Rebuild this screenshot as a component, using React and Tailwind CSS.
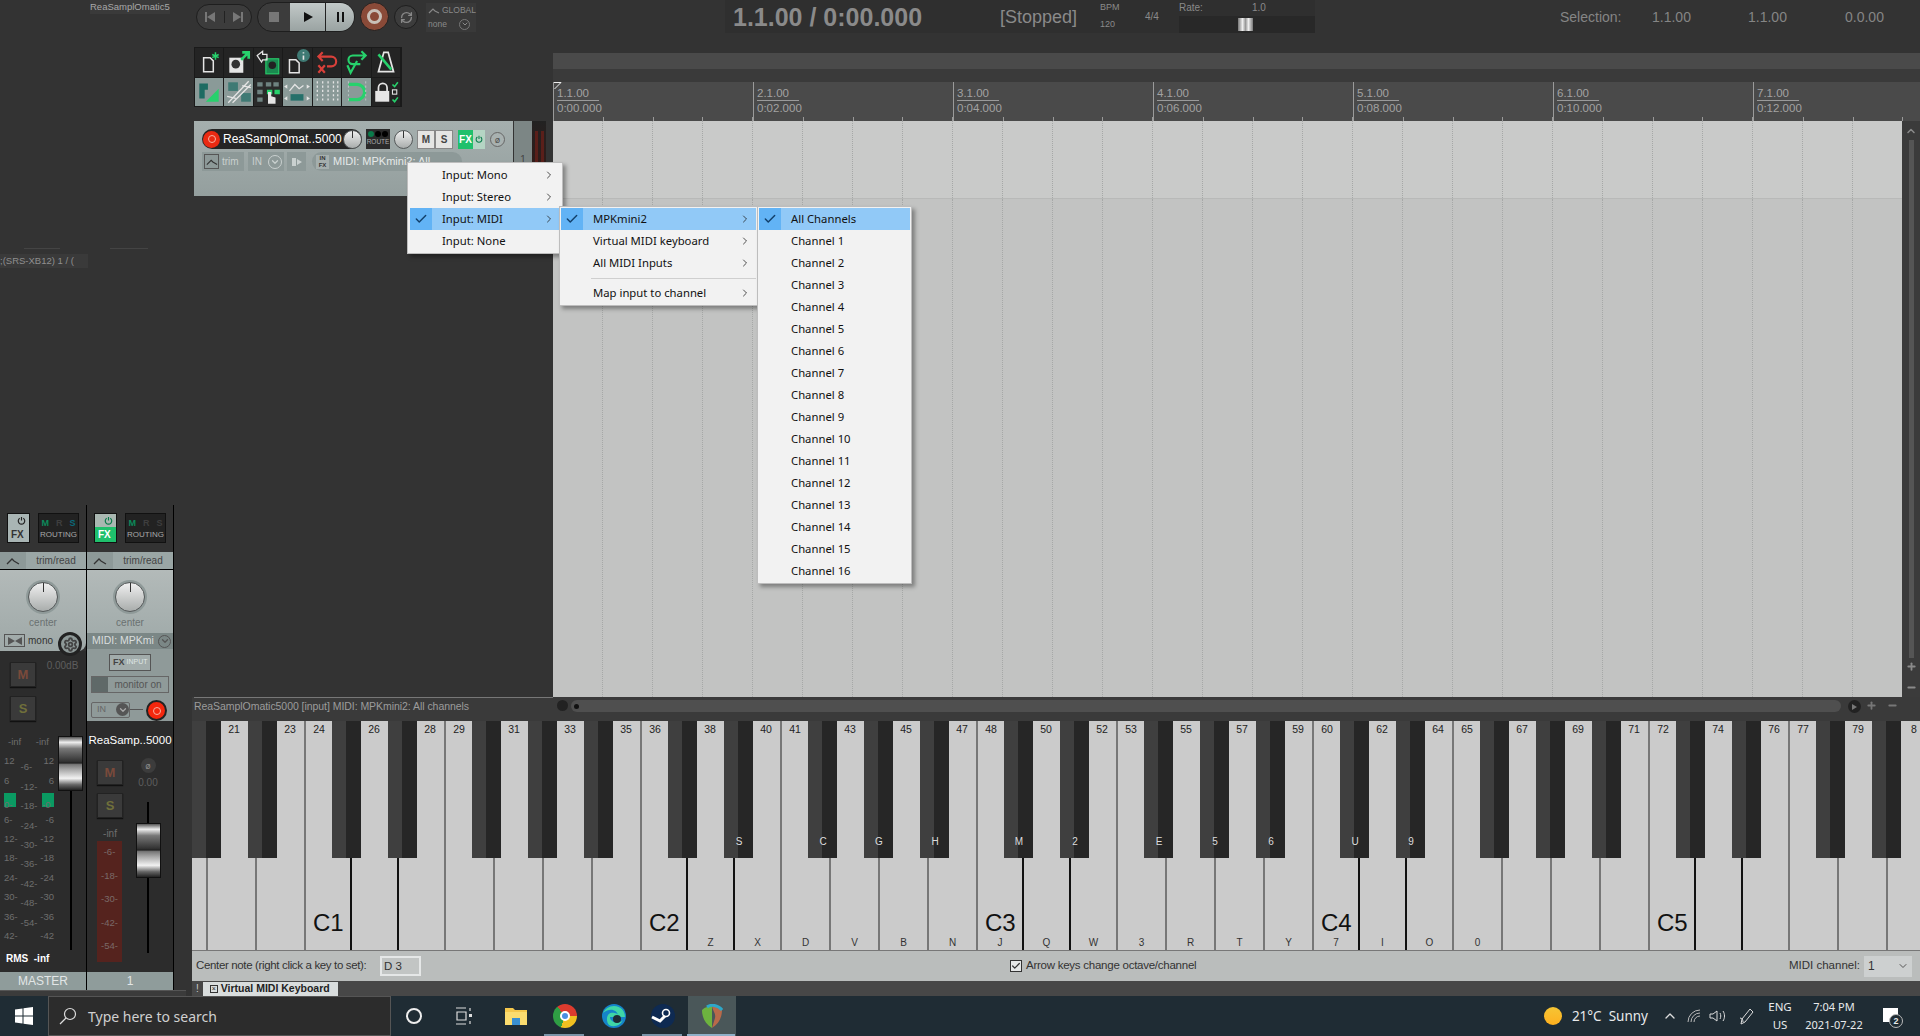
import { Check, ChevronRight, ChevronDown, ChevronUp, Plus, Minus, Settings, RefreshCw } from "lucide-react";

const SANS = "font-['Liberation_Sans',Arial,sans-serif]";
const UI = "font-['Noto_Sans','Open_Sans',sans-serif]";

const BLACK = [1, 3, 6, 8, 10];
const isBlack = (n) => BLACK.includes(n % 12);
const BLACK_LABELS = { 39: "S", 42: "C", 44: "G", 46: "H", 49: "M", 51: "2", 54: "E", 56: "5", 58: "6", 61: "U", 63: "9" };
const WHITE_LABELS = { 38: "Z", 40: "X", 41: "D", 43: "V", 45: "B", 47: "N", 48: "J", 50: "Q", 52: "W", 53: "3", 55: "R", 57: "T", 59: "Y", 60: "7", 62: "I", 64: "O", 65: "0" };
const OCTAVE = [46, 47, 47, 49, 49, 49, 49];
const WHITE_NOTES = [0, 2, 4, 5, 7, 9, 11];

const lowerKeys = () => {
  const keys = [{ w: 14, note: 19 }, { w: 49, note: 21 }, { w: 49, note: 23 }];
  for (let o = 0; o < 5; o++) {
    OCTAVE.forEach((w, i) => keys.push({ w, note: 24 + o * 12 + WHITE_NOTES[i], i }));
  }
  return keys;
};

const Knob = ({ size = "w-[30px] h-[30px]", mark = "h-[9px]" }) => (
  <div className={`${size} rounded-full bg-linear-to-b from-[#f0f0f0] to-[#a9adac] border border-[#55595a] flex justify-center shrink-0`}>
    <div className={`w-[1px] ${mark} bg-[#333]`} />
  </div>
);

const FaderThumb = () => (
  <div className="w-[25px] h-[55px] border border-[#111] bg-[linear-gradient(180deg,#555_0%,#eee_10%,#777_22%,#333_46%,#222_49%,#777_52%,#aaa_62%,#f2f2f2_78%,#666_90%,#222_100%)]" />
);

const MButton = ({ label, color }) => (
  <div className={`w-[26px] h-[25px] bg-[#3a3a3a] border border-[#222] shadow-[0_1px_1px_#111] flex items-center justify-center text-[13px] font-bold ${color} ${SANS}`}>{label}</div>
);

const MrsBox = ({ s = "text-[#3e3e3e]" }) => (
  <div className="w-[41px] h-[30px] bg-[#222] border border-[#111] flex flex-col items-center justify-center">
    <div className={`flex gap-[7px] text-[9px] font-bold leading-[12px] ${SANS}`}>
      <span className="text-[#0b8a5b]">M</span><span className="text-[#3e3e3e]">R</span><span className={s}>S</span>
    </div>
    <span className={`text-[8px] text-[#a8a8a8] leading-[11px] ${SANS}`}>ROUTING</span>
  </div>
);

const Power = ({ color, size = 9 }) => (
  <svg width={size} height={size} viewBox="0 0 10 10" fill="none" stroke={color} strokeWidth="1.3"><path d="M3 2.5a3.6 3.6 0 1 0 4 0M5 1v4" /></svg>
);

const FxBox = ({ on }) => (
  <div className="w-[23px] h-[30px] border border-[#111] flex flex-col">
    <div className={`h-[13px] flex justify-end pr-[3px] items-center ${on ? "bg-[#a9b7b1]" : "bg-[#a9b5b4]"}`}>
      <Power color={on ? "#0a7a4a" : "#222"} />
    </div>
    <div className={`flex-1 text-[10px] font-bold pl-[3px] leading-[15px] ${SANS} ${on ? "bg-[#1fc06c] text-white" : "bg-[#a9b5b4] text-[#333]"}`}>FX</div>
  </div>
);

const TrimRow = () => (
  <div className="h-[18px] flex bg-[#9aa6a5] border-b border-black">
    <div className="w-[26px] flex items-center justify-center bg-[#8d9998]">
      <svg width="14" height="8" viewBox="0 0 14 8" fill="none" stroke="#333" strokeWidth="1.3"><path d="M1 7l5-5 2 2 5 3" /></svg>
    </div>
    <span className={`flex-1 text-center text-[10px] leading-[17px] text-[#444] ${SANS}`}>trim/read</span>
  </div>
);

const Ring = () => (
  <div className="w-[34px] h-[34px] rounded-full bg-[#8f9a99] flex items-center justify-center">
    <Knob />
  </div>
);

const scaleCls = `text-[9.5px] leading-[19.4px] text-[#6e6e6e] ${SANS}`;

const MasterStrip = () => (
  <div className="w-[87px] border-r border-black flex flex-col shrink-0 h-full">
    <div className="h-[47px] flex gap-[8px] pl-[7px] pt-[8px]"><FxBox /><MrsBox s="text-[#0b6a7b]" /></div>
    <TrimRow />
    <div className="h-[81px] bg-linear-to-b from-[#b3bab9] to-[#9ea8a7] rounded-br-[8px] flex flex-col items-center pt-[10px]">
      <Ring />
      <span className={`text-[10px] leading-[12px] mt-[3px] text-[#6a7171] ${SANS}`}>center</span>
      <div className="flex w-full items-center pl-[4px] gap-[3px] mt-[4px]">
        <div className="w-[21px] h-[13px] border border-[#555] flex items-center justify-center">
          <svg width="14" height="8" viewBox="0 0 14 8" fill="#555"><path d="M0 0l7 4-7 4zM14 0L7 4l7 4z" /></svg>
        </div>
        <span className={`text-[10px] text-[#333] ${SANS}`}>mono</span>
      </div>
    </div>
    <div className="flex-1 flex bg-[#2c2c2c] relative">
      <div className="absolute -top-[19px] left-[58px] w-[24px] h-[24px] rounded-full bg-[#8e9998] border-[3px] border-[#222] flex items-center justify-center">
        <Settings size={15} strokeWidth={3} className="text-[#444]" />
      </div>
      <div className="w-[57px] flex flex-col">
        <div className="pl-[10px] pt-[11px] flex flex-col gap-[9px]">
          <MButton label="M" color="text-[#7a4a3a]" />
          <MButton label="S" color="text-[#70703a]" />
        </div>
        <div className={`flex justify-between px-[8px] mt-[11px] ${scaleCls}`}><span>-inf</span><span>-inf</span></div>
        <div className="flex justify-between pl-[4px] pr-[3px]">
          <div className={`${scaleCls} flex flex-col`}>
            {["12", "6", "0-", "6-", "12-", "18-", "24-", "30-", "36-", "42-"].map((t, i) => (
              <span key={i} className={i === 2 ? "bg-[#0a9a62] h-[14px] w-[12px] leading-[24px] my-[2.7px]" : ""}>{t}</span>
            ))}
          </div>
          <div className={`${scaleCls} flex flex-col mt-[-6px]`}>
            {["-6-", "-12-", "-18-", "-24-", "-30-", "-36-", "-42-", "-48-", "-54-"].map((t) => <span key={t} className="mt-[13px] first:mt-[19px] leading-[6.4px]">{t}</span>)}
          </div>
          <div className={`${scaleCls} flex flex-col items-end`}>
            {["12", "6", "-0", "-6", "-12", "-18", "-24", "-30", "-36", "-42"].map((t, i) => (
              <span key={i} className={i === 2 ? "bg-[#0a9a62] h-[14px] w-[12px] leading-[24px] my-[2.7px]" : ""}>{t}</span>
            ))}
          </div>
        </div>
        <div className={`mt-[6px] pl-[6px] text-[10px] font-bold text-white whitespace-nowrap ${SANS}`}>RMS&nbsp;&nbsp;-inf</div>
      </div>
      <div className="flex-1 flex flex-col items-center">
        <span className={`text-[10px] leading-[12px] mt-[9px] -ml-[18px] text-[#5e5e5e] whitespace-nowrap ${SANS}`}>0.00dB</span>
        <div className="w-[2px] h-[270px] bg-black mt-[8px] flex justify-center -ml-[2px]">
          <div className="shrink-0 mt-[56px] h-fit"><FaderThumb /></div>
        </div>
      </div>
    </div>
    <div className={`h-[18px] bg-[#8f9c9b] text-[12px] leading-[18px] text-center text-[#e2e6e6] ${SANS}`}>MASTER</div>
  </div>
);

const TrackStrip = () => (
  <div className="w-[87px] border-r border-black flex flex-col shrink-0 h-full">
    <div className="h-[47px] flex gap-[8px] pl-[7px] pt-[8px]"><FxBox on /><MrsBox /></div>
    <TrimRow />
    <div className="h-[63px] bg-linear-to-b from-[#b3bab9] to-[#a2acab] flex flex-col items-center pt-[10px]">
      <Ring />
      <span className={`text-[10px] leading-[12px] mt-[3px] text-[#6a7171] ${SANS}`}>center</span>
    </div>
    <div className="h-[88px] bg-[#8f9a99] flex flex-col">
      <div className="h-[17px] bg-[#7b8786] flex items-center pl-[5px] justify-between pr-[2px]">
        <span className={`text-[10.5px] text-[#d9dddd] ${SANS}`}>MIDI: MPKmi</span>
        <div className="w-[13px] h-[13px] rounded-full border border-[#555] flex items-center justify-center"><ChevronDown size={10} strokeWidth={3} className="text-[#555]" /></div>
      </div>
      <div className={`ml-[22px] mt-[5px] w-[42px] h-[17px] border border-[#555] bg-[#a2acab] flex items-center text-[9px] font-bold text-[#444] pl-[3px] gap-[2px] ${SANS}`}>FX<span className="font-normal text-[7px] text-[#dfe5e4]">INPUT</span></div>
      <div className="ml-[4px] mt-[5px] w-[78px] h-[17px] border border-[#666] flex items-center bg-[#8f9a99]">
        <div className="w-[16px] h-full bg-[#5f6968]" />
        <span className={`flex-1 text-center text-[10px] text-[#555] ${SANS}`}>monitor on</span>
      </div>
      <div className="flex items-center ml-[4px] mt-[5px]">
        <div className={`w-[39px] h-[16px] border border-[#666] rounded-[2px] flex items-center justify-between pl-[5px] text-[9px] text-[#666] ${SANS}`}>IN
          <div className="w-[13px] h-[13px] rounded-full bg-[#555] flex items-center justify-center"><ChevronDown size={10} strokeWidth={3} className="text-[#aaa]" /></div>
        </div>
        <div className="w-[13px] h-[1px] bg-[#555]" />
        <div className="w-[21px] h-[21px] rounded-full bg-[#f4270d] border-[2px] border-[#222] ml-[3px] mt-[2px] flex items-center justify-center">
          <div className="w-[8px] h-[8px] rounded-full border border-[#f8b0a0]" />
        </div>
      </div>
    </div>
    <div className="flex-1 bg-[#2c2c2c] flex flex-col">
      <div className={`text-center text-[11.5px] leading-[14px] mt-[12px] text-white whitespace-nowrap ${SANS}`}>ReaSamp..5000</div>
      <div className="flex flex-1">
        <div className="w-[36px] shrink-0 pl-[10px] pt-[13px] flex flex-col">
          <MButton label="M" color="text-[#7a4a3a]" />
          <div className="h-[8px] shrink-0" />
          <MButton label="S" color="text-[#70703a]" />
          <span className={`w-[26px] text-center text-[10px] leading-[12px] mt-[10px] text-[#6e6e6e] ${SANS}`}>-inf</span>
          <div className="w-[25px] h-[121px] mt-[1px] bg-[#55231e] flex flex-col items-center pt-[5px] gap-[11.5px]">
            {["-6-", "-18-", "-30-", "-42-", "-54-"].map((t) => <span key={t} className={`text-[9.5px] leading-[12px] text-[#7a6a68] ${SANS}`}>{t}</span>)}
          </div>
        </div>
        <div className="flex-1 flex flex-col items-center">
          <div className="w-[15px] h-[15px] rounded-full bg-[#3c3c3c] mt-[11px] flex items-center justify-center text-[9px] text-[#888]">ø</div>
          <span className={`text-[10px] leading-[12px] mt-[4px] text-[#5e5e5e] ${SANS}`}>0.00</span>
          <div className="w-[2px] h-[151px] bg-black mt-[13px] flex justify-center">
            <div className="shrink-0 mt-[21px] h-fit"><FaderThumb /></div>
          </div>
        </div>
      </div>
    </div>
    <div className={`h-[18px] bg-[#8f9c9b] text-[12px] leading-[18px] text-center text-[#e2e6e6] ${SANS}`}>1</div>
  </div>
);

const Mixer = () => (
  <div className="w-[192px] shrink-0 flex flex-col bg-[#333]">
    <div className="h-[505px] flex flex-col">
      <div className={`ml-[90px] w-[80px] h-[14px] bg-[#3a3a3a] overflow-hidden whitespace-nowrap text-[9.5px] leading-[14px] text-[#a8a8a8] ${SANS}`}>ReaSamplOmatic5</div>
      <div className="flex-1" />
      <div className="flex ml-[24px] gap-[50px] mb-[5px]">
        <div className="w-[36px] h-[1px] bg-[#444]" />
        <div className="w-[38px] h-[1px] bg-[#444]" />
      </div>
      <div className={`w-[88px] h-[14px] bg-[#3a3a3a] whitespace-nowrap overflow-hidden text-[9.5px] leading-[14px] text-[#8f8f8f] mb-[237px] ${SANS}`}>;(SRS-XB12) 1 / (</div>
    </div>
    <div className="h-[485px] flex"><MasterStrip /><TrackStrip /></div>
    <div className="h-[6px] w-[186px] bg-[#3b3b3b] border-t border-[#555]" />
  </div>
);

const Glyph = ({ children, cls = "bg-[#242424]" }) => (
  <div className={`flex-1 h-[28.5px] ${cls} border-r border-[#1a1a1a] flex items-center justify-center`}>
    <svg width="28" height="26" viewBox="0 0 26 24" fill="none">{children}</svg>
  </div>
);

const G = "#27d16c";
const W = "#e5e5e5";
const ACTIVE = "bg-[#8a9a98]";

const Toolbar = () => (
  <div className="w-[208px] flex flex-col gap-[1px] bg-[#1a1a1a] ml-[2px] border border-[#1a1a1a]">
    <div className="flex">
      <Glyph><path d="M8 8h6l3 3v10H8z" stroke={W} strokeWidth="1.4" /><path d="M19 3v7M16 5l6 3M22 5l-6 3" stroke={G} strokeWidth="1.4" /></Glyph>
      <Glyph><rect x="4" y="8" width="13" height="14" fill={W} /><circle cx="10" cy="14" r="4" fill="#333" /><path d="M15 10l7-7M16 3h6v6" stroke={G} strokeWidth="2.5" /></Glyph>
      <Glyph><rect x="11" y="9" width="12" height="14" fill="#1a8a50" stroke={G} /><circle cx="17" cy="15" r="3.5" fill="#222" /><path d="M3 6l5-4v3h4v5H8l-1 2z" stroke={W} strokeWidth="1.2" /></Glyph>
      <Glyph><path d="M6 10h6l3 3v9H6z" stroke={W} strokeWidth="1.4" /><circle cx="19" cy="6" r="6" fill="#3f7a74" /><path d="M19 3v1M19 6v4" stroke={W} strokeWidth="1.5" /></Glyph>
      <Glyph><path d="M5 7h12a4 4 0 0 1 0 9h-4M9 3L5 7l4 4" stroke="#d9403a" strokeWidth="2" /><path d="M5 15l6 7M11 15l-6 7" stroke="#d9403a" strokeWidth="2" /></Glyph>
      <Glyph><path d="M22 6H10a4 4 0 0 0 0 8h7M18 2l4 4-4 4" stroke={G} strokeWidth="2" /><path d="M5 15l3 7 6-11" stroke={G} strokeWidth="2" /></Glyph>
      <Glyph><path d="M11 3h4l5 18H6z" stroke={W} strokeWidth="1.6" /><path d="M6 5l12 14" stroke={G} strokeWidth="2.4" /></Glyph>
    </div>
    <div className="flex">
      <Glyph cls={ACTIVE}><path d="M4 4h8v6h-3v8H4z" fill="#1d6b62" /><path d="M22 9v12H10z" fill={G} /></Glyph>
      <Glyph cls={ACTIVE}><rect x="3" y="3" width="9" height="8" fill="#3f7a74" /><rect x="15" y="13" width="9" height="8" fill="#3f7a74" /><path d="M3 22L22 2M7 22L24 5M2 16l8 2M16 6l8 2" stroke={W} strokeWidth="1.2" /></Glyph>
      <Glyph cls="bg-[#2a2a2a]"><path d="M3 3h5v4H3zM11 3h5v4h-5zM18 3h5v4h-5zM3 10h5v4H3zM3 17h5v4H3z" fill="#6e8280" /><path d="M12 10h5v4h-5zM19 10h5v4h-5z" fill={G} /><path d="M13 12v11h7v-6l-4-1v-4z" fill={W} /></Glyph>
      <Glyph cls={ACTIVE}><path d="M6 11l5-6 4 4 4-3" stroke={W} strokeWidth="1.2" /><path d="M1 7l3-2v4zM25 7l-3-2v4zM1 18l3-2v4zM25 18l-3-2v4z" fill={W} /><rect x="7" y="14" width="12" height="6" fill="#25706a" /></Glyph>
      <Glyph cls={ACTIVE}><path d="M4 2v20M9 2v20M14 2v20M19 2v20M23 2v20" stroke={W} strokeWidth="1.2" strokeDasharray="2 2" /></Glyph>
      <Glyph cls={ACTIVE}><path d="M6 5h8a7 7 0 0 1 0 14H6" stroke={G} strokeWidth="3" /><path d="M6 2v20M22 2v20" stroke="#b5c2c0" strokeDasharray="2 2" /></Glyph>
      <Glyph><path d="M6 11V8a4 4 0 0 1 8 0v3" stroke={W} strokeWidth="1.6" /><rect x="3" y="11" width="13" height="10" fill={W} /><path d="M19 5l2 2 3-4M19 19l2 2 3-4" stroke={G} strokeWidth="1.5" /><rect x="19" y="10" width="4" height="4" stroke={W} /></Glyph>
    </div>
  </div>
);

const TrackPanel = () => (
  <div className="flex h-[77px] ml-[2px]">
    <div className="w-[319px] h-[75px] bg-linear-to-b from-[#a5afae] to-[#949f9e] pt-[8px] pl-[8px] flex flex-col gap-[3px]">
      <div className="flex items-center h-[20px]">
        <div className="w-[160px] h-[20px] bg-[#252525] rounded-full flex items-center">
          <div className="w-[17px] h-[17px] ml-[1px] rounded-full bg-[#ea2a12] flex items-center justify-center shrink-0">
            <div className="w-[8px] h-[8px] rounded-full border border-[#f7b2a3]" />
          </div>
          <span className={`text-[12px] ml-[3px] text-white whitespace-nowrap ${SANS}`}>ReaSamplOmat..5000</span>
          <div className="ml-auto"><Knob size="w-[19px] h-[19px]" mark="h-[7px]" /></div>
        </div>
        <div className="w-[24px] h-[20px] bg-[#2a2a2a] ml-[4px] flex flex-col items-center overflow-hidden">
          <div className="flex gap-[1px] mt-[2px]">
            <div className="w-[6px] h-[6px] rounded-full bg-[#0a7a4a]" /><div className="w-[6px] h-[6px] rounded-full bg-black" /><div className="w-[6px] h-[6px] rounded-full bg-black" />
          </div>
          <span className={`text-[6.5px] text-[#aaa] leading-[10px] ${SANS}`}>ROUTE</span>
        </div>
        <div className="ml-[4px]"><Knob size="w-[19px] h-[19px]" mark="h-[7px]" /></div>
        <div className={`ml-[4px] w-[18px] h-[19px] bg-[#e5e5e3] border border-[#888] text-[10px] font-bold text-[#444] text-center leading-[17px] ${SANS}`}>M</div>
        <div className={`w-[18px] h-[19px] bg-[#e5e5e3] border border-[#888] text-[10px] font-bold text-[#444] text-center leading-[17px] ${SANS}`}>S</div>
        <div className="ml-[5px] flex h-[19px]">
          <div className={`w-[15px] bg-[#1fc06c] text-white text-[10px] font-bold text-center leading-[19px] ${SANS}`}>FX</div>
          <div className="w-[12px] bg-[#b5d5c4] flex items-center justify-center"><Power color="#0a7a4a" size={8} /></div>
        </div>
        <div className="ml-[5px] w-[15px] h-[15px] rounded-full border border-[#666] bg-[#a8b1b0] flex items-center justify-center text-[9px] leading-none text-[#555]">ø</div>
      </div>
      <div className="flex items-center h-[19px] gap-[4px]">
        <div className="w-[42px] h-[19px] bg-[#8d9998] flex items-center pl-[2px] gap-[3px]">
          <div className="w-[15px] h-[15px] border border-[#555] flex items-center justify-center">
            <svg width="12" height="8" viewBox="0 0 14 8" fill="none" stroke="#333" strokeWidth="1.3"><path d="M1 7l5-5 2 2 5 3" /></svg>
          </div>
          <span className={`text-[10px] text-[#c9d0cf] ${SANS}`}>trim</span>
        </div>
        <div className="w-[36px] h-[19px] bg-[#8d9998] flex items-center justify-between pl-[4px] pr-[2px]">
          <span className={`text-[10px] text-[#c9d0cf] ${SANS}`}>IN</span>
          <div className="w-[14px] h-[14px] rounded-full border border-[#c9d0cf] flex items-center justify-center"><ChevronDown size={10} strokeWidth={3} className="text-[#c9d0cf]" /></div>
        </div>
        <div className="w-[19px] h-[19px] bg-[#8d9998] ml-[-1px] flex items-center justify-center">
          <svg width="12" height="12" viewBox="0 0 12 12" fill="#c9d0cf"><path d="M1 2h4v8H1zM6 3l5 3-5 3z" /></svg>
        </div>
        <div className="ml-[2px] w-[150px] h-[19px] rounded-full bg-[#8d9998] flex items-center pl-[4px] gap-[4px]">
          <div className={`w-[13px] h-[14px] bg-[#a5afae] text-[6px] font-bold leading-[7px] text-center text-[#333] ${SANS}`}>IN<br />FX</div>
          <span className={`text-[11px] text-[#e6e9e9] whitespace-nowrap ${SANS}`}>MIDI: MPKmini2: All</span>
        </div>
      </div>
    </div>
    <div className={`w-[18px] h-[75px] ml-[1px] bg-[#7c8685] text-[10px] text-[#444] text-center pt-[31px] ${SANS}`}>1</div>
    <div className="w-[14px] h-[75px] bg-linear-to-b from-[#222] to-[#3a1512] flex justify-center gap-[3px] pt-[10px]">
      <div className="w-[3px] h-[65px] bg-[#5a1f1a]" /><div className="w-[3px] h-[65px] bg-[#5a1f1a]" />
    </div>
  </div>
);

const Transport = () => (
  <div className="h-[47px] flex items-start pl-[4px] pt-[2px] gap-[5px]">
    <div className="mt-[2px] w-[56px] h-[26px] rounded-full bg-[#3c3c3c] border border-[#1e1e1e] flex items-center text-[#888]">
      <div className="flex-1 flex justify-center border-r border-[#222]"><svg width="12" height="12" viewBox="0 0 12 12" fill="#777"><path d="M1 1h2v10H1zM11 1v10L3 6z" /></svg></div>
      <div className="flex-1 flex justify-center"><svg width="12" height="12" viewBox="0 0 12 12" fill="#777"><path d="M9 1h2v10H9zM1 1v10l8-5z" /></svg></div>
    </div>
    <div className="w-[98px] h-[30px] rounded-full bg-[#3c3c3c] border border-[#1e1e1e] flex overflow-hidden">
      <div className="w-[32px] flex items-center justify-center"><div className="w-[10px] h-[10px] bg-[#777]" /></div>
      <div className="w-[36px] bg-linear-to-b from-[#c2c9c8] to-[#9aa3a2] flex items-center justify-center border-r border-[#222]"><svg width="12" height="12" viewBox="0 0 12 12" fill="#111"><path d="M2 1l9 5-9 5z" /></svg></div>
      <div className="flex-1 bg-linear-to-b from-[#c2c9c8] to-[#9aa3a2] flex items-center justify-center gap-[3px]"><div className="w-[2px] h-[10px] bg-[#111]" /><div className="w-[2px] h-[10px] bg-[#111]" /></div>
    </div>
    <div className="w-[29px] h-[29px] rounded-full bg-[#8a4a38] border border-[#222] flex items-center justify-center">
      <div className="w-[15px] h-[15px] rounded-full border-[3px] border-[#c9c0b8]" />
    </div>
    <div className="mt-[3px] w-[24px] h-[24px] rounded-full bg-[#3c3c3c] border border-[#1e1e1e] flex items-center justify-center">
      <RefreshCw size={13} strokeWidth={2.5} className="text-[#888]" />
    </div>
    <div className={`ml-[3px] mt-[1px] w-[50px] h-[29px] bg-[#393939] pl-[2px] text-[8.5px] text-[#8a8a8a] ${SANS}`}>
      <div className="flex items-center gap-[2px] leading-[14px]">
        <svg width="12" height="7" viewBox="0 0 12 7" fill="none" stroke="#888" strokeWidth="1.2"><path d="M1 6l4-4 2 2 4 2" /></svg>GLOBAL
      </div>
      <div className="flex items-center justify-between pr-[6px] leading-[14px]">none
        <div className="w-[11px] h-[11px] rounded-full border border-[#777] flex items-center justify-center"><ChevronDown size={8} strokeWidth={3} /></div>
      </div>
    </div>
  </div>
);

const TimeBar = () => (
  <div className={`h-[53px] flex items-start ${SANS}`}>
    <div className="ml-[172px] w-[590px] h-[33px] bg-[#2f2f2f] flex items-center text-[#8a8a8a]">
      <span className="ml-[8px] w-[267px] pt-[3px] text-[25px] font-bold whitespace-nowrap">1.1.00 / 0:00.000</span>
      <span className="w-[100px] pt-[2px] text-[18px]">[Stopped]</span>
      <div className="w-[45px] flex flex-col text-[9px] leading-[17px] -mt-[1px]"><span>BPM</span><span>120</span></div>
      <span className="w-[34px] text-[10px]">4/4</span>
      <div className="flex-1 flex flex-col h-full">
        <div className="h-[16px] flex text-[10px] leading-[16px]"><span className="w-[73px]">Rate:</span><span>1.0</span></div>
        <div className="flex-1 bg-[#282828] pl-[59px] pt-[2px]"><div className="w-[15px] h-[13px] bg-[linear-gradient(90deg,#777,#eee_30%,#999_50%,#eee_70%,#777)]" /></div>
      </div>
    </div>
    <div className="flex text-[14px] text-[#858585] items-center h-[33px] pt-[2px]">
      <span className="ml-[245px] w-[92px]">Selection:</span>
      <span className="w-[96px]">1.1.00</span>
      <span className="w-[97px]">1.1.00</span>
      <span>0.0.00</span>
    </div>
  </div>
);

const Ruler = () => (
  <div className="h-[39px] flex bg-[#4a4a4a] overflow-hidden">
    {[1, 2, 3, 4, 5, 6, 7].map((m) => (
      <div key={m} className={`relative w-[200px] shrink-0 border-l border-[#9a9a9a] flex flex-col text-[11.5px] text-[#a2a2a2] pl-[3px] ${SANS}`}>
        {m === 1 && (
          <svg className="absolute left-0 top-0" width="8" height="8" viewBox="0 0 8 8" fill="none" stroke="#eee"><path d="M0 .5h7L.5 7" /></svg>
        )}
        <span className="w-[42px] border-b border-[#9a9a9a] leading-[13px] mt-[5px]">{m}.1.00</span>
        <span className="leading-[14px]">0:{String((m - 1) * 2).padStart(2, "0")}.000</span>
        <div className="mt-auto flex h-[4px] -ml-[3px]">
          {[0, 1, 2, 3].map((t) => <span key={t} className="w-[50px] border-r border-[#999]" />)}
        </div>
      </div>
    ))}
  </div>
);

const Lane = ({ h, cls }) => (
  <div className={`${h} ${cls} flex overflow-hidden`}>
    {Array.from({ length: 28 }).map((_, i) => <div key={i} className="w-[50px] shrink-0 border-r border-dotted border-[#a6a8a7]" />)}
  </div>
);

const Arrange = () => (
  <div className="w-[1367px] shrink-0 flex flex-col">
    <TimeBar />
    <div className="h-[16px] bg-[#4a4a4a]" />
    <div className="h-[13px] bg-[#3a3a3a]" />
    <Ruler />
    <div className="h-[576px] flex">
      <div className="w-[1349px] flex flex-col">
        <Lane h="h-[77px]" cls="bg-[#c9cac9]" />
        <div className="h-[1px] bg-[#b8b9b8]" />
        <Lane h="h-[498px]" cls="bg-[#c2c3c2]" />
      </div>
      <div className="flex-1 bg-[#3b3b3b] flex flex-col items-center text-[#8a8a8a] pt-[4px] pb-[4px]">
        <ChevronUp size={12} strokeWidth={3} />
        <div className="w-[5px] flex-1 bg-[#555] my-[3px]" />
        <Plus size={11} strokeWidth={4} />
        <Minus size={11} strokeWidth={4} className="mt-[10px]" />
      </div>
    </div>
  </div>
);

const StatusRow = () => (
  <div className="h-[24px] flex bg-[#3a3a3a]">
    <div className={`w-[361px] pl-[2px] shrink-0 text-[10.5px] text-[#9c9c9c] whitespace-nowrap ${SANS}`}>
      <div className="border-t border-[#777] leading-[17px] pt-[0px] tracking-[-0.05px]">ReaSamplOmatic5000 [input] MIDI: MPKmini2: All channels</div>
    </div>
    <div className="flex-1 flex items-start pt-[3px]">
      <div className="w-[11px] h-[11px] rounded-full bg-[#222] ml-[4px] mr-[3px]" />
      <div className="w-[1270px] h-[12px] rounded-full bg-[#4f4f4f] flex items-center pl-[3px]"><div className="w-[5px] h-[5px] rounded-full bg-[#111]" /></div>
      <div className="ml-[7px] w-[13px] h-[13px] rounded-full bg-[#222] flex items-center justify-center"><div className="border-y-[3px] border-l-[5px] border-y-transparent border-l-[#777]" /></div>
      <Plus size={11} strokeWidth={4} className="text-[#777] ml-[5px]" />
      <Minus size={11} strokeWidth={4} className="text-[#777] ml-[10px]" />
    </div>
  </div>
);

const Keyboard = () => (
  <div className={`h-[230px] flex flex-col overflow-hidden bg-[#cbcbcb] ${SANS}`}>
    <div className="h-[137px] flex shrink-0">
      {Array.from({ length: 63 }).map((_, i) => {
        const n = 20 + i;
        if (isBlack(n)) {
          return (
            <div key={n} className="w-[28px] shrink-0 flex bg-[#aaa]">
              <div className="w-[14px] bg-[#3f3f3f]" />
              <div className="w-[15px] shrink-0 bg-[#262626] relative -mr-[1px]">
                <span className="absolute bottom-[9px] -left-[7px] w-[16px] text-center text-[10px] text-[#dcdcdc]">{BLACK_LABELS[n]}</span>
              </div>
            </div>
          );
        }
        const gap = n % 12 === 0 || n % 12 === 5;
        return (
          <div key={n} className={`w-[28px] shrink-0 text-center text-[10.5px] text-[#222] pt-[1px] ${gap ? "border-l-2 border-[#777]" : ""}`}>{n === 81 ? "8" : n}</div>
        );
      })}
    </div>
    <div className="h-[93px] flex shrink-0 border-b border-[#777]">
      {lowerKeys().map((k, idx) => {
        const dark = k.i === 1 || k.i === 2;
        return (
          <div key={idx} style={{ width: k.w }} className={`shrink-0 h-full flex flex-col items-center justify-end relative ${idx === 0 ? "" : dark ? "border-l-2 border-[#111]" : "border-l-2 border-[#777]"}`}>
            {k.i === 0 && (
              <span className="absolute left-[7px] bottom-[14px] text-[24px] leading-[26px] text-[#111]">C{k.note / 12 - 1}</span>
            )}
            <span className="text-[10px] leading-[12px] mb-[1px] text-[#333]">{WHITE_LABELS[k.note]}</span>
          </div>
        );
      })}
    </div>
  </div>
);

const Controls = () => (
  <div className={`h-[30px] bg-[#babdbc] flex items-center text-[11.5px] text-[#333] ${SANS}`}>
    <span className="ml-[4px] w-[184px] shrink-0 whitespace-nowrap tracking-[-0.35px]">Center note (right click a key to set):</span>
    <div className="w-[41px] shrink-0 h-[20px] border-2 border-[#e5e7e7] bg-[#c2c5c4] pl-[2px] leading-[16px]">D 3</div>
    <div className="ml-[589px] w-[12px] h-[12px] shrink-0 border border-[#333] bg-[#e5e7e7] flex items-center justify-center"><Check size={10} strokeWidth={3} /></div>
    <span className="ml-[4px] w-[763px] shrink-0 whitespace-nowrap tracking-[-0.25px]">Arrow keys change octave/channel</span>
    <span className="w-[67px] shrink-0 whitespace-nowrap">MIDI channel:</span>
    <div className="ml-[8px] w-[48px] shrink-0 h-[21px] bg-[#cdd0d0] flex items-center justify-between pl-[4px] pr-[3px] text-[12px]">1<ChevronDown size={12} className="text-[#555]" /></div>
  </div>
);

const Tabs = () => (
  <div className={`h-[15px] bg-[#474747] flex items-end ${SANS}`}>
    <span className="ml-[4px] mr-[4px] text-[10px] leading-[14px] text-[#ccc]">!</span>
    <div className="w-[135px] h-[14px] bg-[#d9dddd] flex items-center pl-[7px] gap-[3px] text-[10.5px] font-bold text-[#222]">
      <div className="w-[8px] h-[8px] border border-[#333] text-[7px] leading-[6px] text-center font-normal">×</div>
      Virtual MIDI Keyboard
    </div>
  </div>
);

const MenuItem = ({ label, active, arrow = true }) => (
  <div className={`h-[22px] flex items-center text-[11.3px] text-[#111] ${UI} ${active ? "bg-[#91c9f7]" : ""}`}>
    <div className={`w-[22px] h-full flex items-center justify-center shrink-0 ${active ? "bg-[#62b3f5]" : ""}`}>
      {active && <Check size={14} strokeWidth={2.5} className="text-[#12406b]" />}
    </div>
    <span className="ml-[10px] whitespace-nowrap">{label}</span>
    {arrow && <ChevronRight size={12} strokeWidth={1.6} className="ml-auto mr-[5px] text-[#222]" />}
  </div>
);

const Menus = () => {
  const channels = ["Channel 1", "Channel 2", "Channel 3", "Channel 4", "Channel 5", "Channel 6", "Channel 7", "Channel 8", "Channel 9", "Channel 10", "Channel 11", "Channel 12", "Channel 13", "Channel 14", "Channel 15", "Channel 16"];
  return (
    <>
      <div className="absolute left-[407px] top-[162px] w-[156px] bg-[#f2f2f2] border border-[#bdbdbd] shadow-[3px_3px_4px_rgba(0,0,0,0.35)] px-[2px] py-[1px]">
        <MenuItem label="Input: Mono" />
        <MenuItem label="Input: Stereo" />
        <MenuItem label="Input: MIDI" active />
        <MenuItem label="Input: None" arrow={false} />
      </div>
      <div className="absolute left-[559px] top-[206px] w-[199px] bg-[#f2f2f2] border border-[#bdbdbd] shadow-[3px_3px_4px_rgba(0,0,0,0.35)] p-[1px]">
        <MenuItem label="MPKmini2" active />
        <MenuItem label="Virtual MIDI keyboard" />
        <MenuItem label="All MIDI Inputs" />
        <div className="h-[1px] bg-[#cfcfcf] ml-[30px] my-[3.5px]" />
        <MenuItem label="Map input to channel" />
      </div>
      <div className="absolute left-[757px] top-[206px] w-[155px] bg-[#f2f2f2] border border-[#bdbdbd] shadow-[3px_3px_4px_rgba(0,0,0,0.35)] p-[1px]">
        <MenuItem label="All Channels" active arrow={false} />
        {channels.map((c) => <MenuItem key={c} label={c} arrow={false} />)}
      </div>
    </>
  );
};

const Taskbar = () => (
  <div className="h-[40px] bg-[#1f2c34] flex items-center text-[#e8eaeb] relative">
    <div className="w-[48px] flex justify-center">
      <svg width="18" height="18" viewBox="0 0 18 18" fill="#fff"><path d="M0 2.5l7.5-1v7H0zM8.5 1.3L18 0v8.5H8.5zM0 9.5h7.5v7l-7.5-1zM8.5 9.5H18V18l-9.5-1.3z" /></svg>
    </div>
    <div className={`w-[343px] h-[40px] bg-[#2c2c2c] border border-[#555] flex items-center pl-[10px] text-[14px] text-[#d0d0d0] ${UI}`}>
      <svg width="18" height="18" viewBox="0 0 18 18" fill="none" stroke="#ddd" strokeWidth="1.2"><circle cx="11" cy="7" r="5.5" /><path d="M7 11l-6 6" /></svg>
      <span className="ml-[11px]">Type here to search</span>
    </div>
    <div className="ml-[15px] w-[16px] h-[16px] rounded-full border-2 border-[#eee]" />
    <svg className="ml-[33px]" width="18" height="18" viewBox="0 0 18 18" fill="none" stroke="#ddd" strokeWidth="1.2"><path d="M1 1h10M1 17h10M2 5h9v8H2zM15 1v3M15 14v3" /><rect x="14" y="7" width="3" height="3" fill="#ddd" stroke="none" /></svg>
    <svg className="ml-[32px]" width="22" height="20" viewBox="0 0 22 20"><path d="M0 2h8l2 2h12v15H0z" fill="#f5c84c" /><path d="M0 6h22v13H0z" fill="#fbdc6f" /><rect x="7" y="12" width="8" height="7" fill="#3a8fd0" /></svg>
    <div className="ml-[26px] w-[24px] h-[24px] rounded-full bg-[conic-gradient(from_-40deg,#dc3b2e_0_130deg,#f0c020_130deg_240deg,#2f9e44_240deg_360deg)] flex items-center justify-center">
      <div className="w-[10px] h-[10px] rounded-full bg-[#4a90e2] border-2 border-white" />
    </div>
    <svg className="ml-[25px]" width="24" height="24" viewBox="0 0 24 24"><circle cx="12" cy="12" r="12" fill="#1583c9" /><path d="M12 2c7 0 11 5 11 11H8c0 4 4 6 9 5 2 0 3-1 4-2-2 5-9 8-14 5C5 19 4 14 6 11 8 7 16 9 16 11 15 6 8 3 1 9 3 5 7 2 12 2z" fill="#3fd6a6" /><circle cx="15" cy="15" r="4" fill="#1f2c34" /></svg>
    <svg className="ml-[25px]" width="24" height="24" viewBox="0 0 24 24"><circle cx="12" cy="12" r="12" fill="#0e2a52" /><circle cx="15" cy="9" r="3.5" fill="none" stroke="#fff" strokeWidth="1.6" /><path d="M1 13l8 4 5-5" stroke="#fff" strokeWidth="3" fill="none" /></svg>
    <div className="ml-[13px] w-[48px] h-[40px] bg-[#4a5759] flex items-center justify-center">
      <svg width="22" height="24" viewBox="0 0 22 24"><path d="M11 24C4 20 1 13 1 6c3-3 7-4 10-4z" fill="#6db33f" /><path d="M11 24c7-4 10-11 10-18-3-3-7-4-10-4 1 6 4 7 3 12z" fill="#b86a4a" /><path d="M6 3c4-3 11-2 15 3" stroke="#2ea8c9" strokeWidth="3" fill="none" /></svg>
    </div>
    <div className="ml-auto flex items-center">
      <div className="w-[18px] h-[18px] rounded-full bg-linear-to-b from-[#f5c534] to-[#ffb01e]" />
      <span className={`ml-[10px] text-[13.5px] ${UI}`}>21°C&nbsp;&nbsp;Sunny</span>
      <ChevronUp size={16} className="ml-[14px] text-[#ddd]" />
      <svg className="ml-[9px]" width="15" height="14" viewBox="0 0 15 14" fill="none" stroke="#bbb"><path d="M1 13a12 12 0 0 1 12-12M4 13a9 9 0 0 1 9-9M7 13a6 6 0 0 1 6-6" /></svg>
      <svg className="ml-[7px]" width="18" height="14" viewBox="0 0 18 14" fill="none" stroke="#ddd"><path d="M1 5h3l4-3v10L4 9H1zM11 4c1 2 1 4 0 6M14 2c2 3 2 7 0 10" /></svg>
      <svg className="ml-[12px]" width="16" height="18" viewBox="0 0 16 18" fill="none" stroke="#ddd"><path d="M3 12l8-10 3 3-8 10-4 2zM1 11c2 0 3 2 3 4" /></svg>
      <div className={`ml-[13px] w-[24px] flex flex-col items-center text-[11.5px] leading-[18px] ${UI}`}><span>ENG</span><span>US</span></div>
      <div className={`ml-[13px] w-[58px] flex flex-col items-center text-[11px] leading-[18px] whitespace-nowrap ${UI}`}><span>7:04 PM</span><span>2021-07-22</span></div>
      <div className="ml-[20px] mr-[17px] relative w-[20px] h-[24px]">
        <div className="w-[15px] h-[14px] bg-white mt-[4px]" />
        <div className={`absolute right-0 bottom-0 w-[14px] h-[14px] rounded-full bg-[#1f2c34] border border-[#bbb] text-[9px] font-bold leading-[12px] text-center ${SANS}`}>2</div>
      </div>
    </div>
    <div className="absolute left-[544px] bottom-0 w-[40px] h-[2px] bg-[#7a94a8]" />
    <div className="absolute left-[642px] bottom-0 w-[40px] h-[2px] bg-[#7a94a8]" />
    <div className="absolute left-[687px] bottom-0 w-[48px] h-[2px] bg-[#8fb0c8]" />
  </div>
);

export default function App() {
  return (
    <div className="relative w-[1920px] h-[1036px] overflow-hidden bg-[#333] flex flex-col">
      <div className="h-[996px] flex">
        <Mixer />
        <div className="w-[1728px] flex flex-col">
          <div className="h-[697px] flex">
            <div className="w-[361px] shrink-0 flex flex-col">
              <Transport />
              <Toolbar />
              <div className="h-[14px] shrink-0" />
              <TrackPanel />
            </div>
            <Arrange />
          </div>
          <StatusRow />
          <Keyboard />
          <Controls />
          <Tabs />
        </div>
      </div>
      <Taskbar />
      <Menus />
    </div>
  );
}
